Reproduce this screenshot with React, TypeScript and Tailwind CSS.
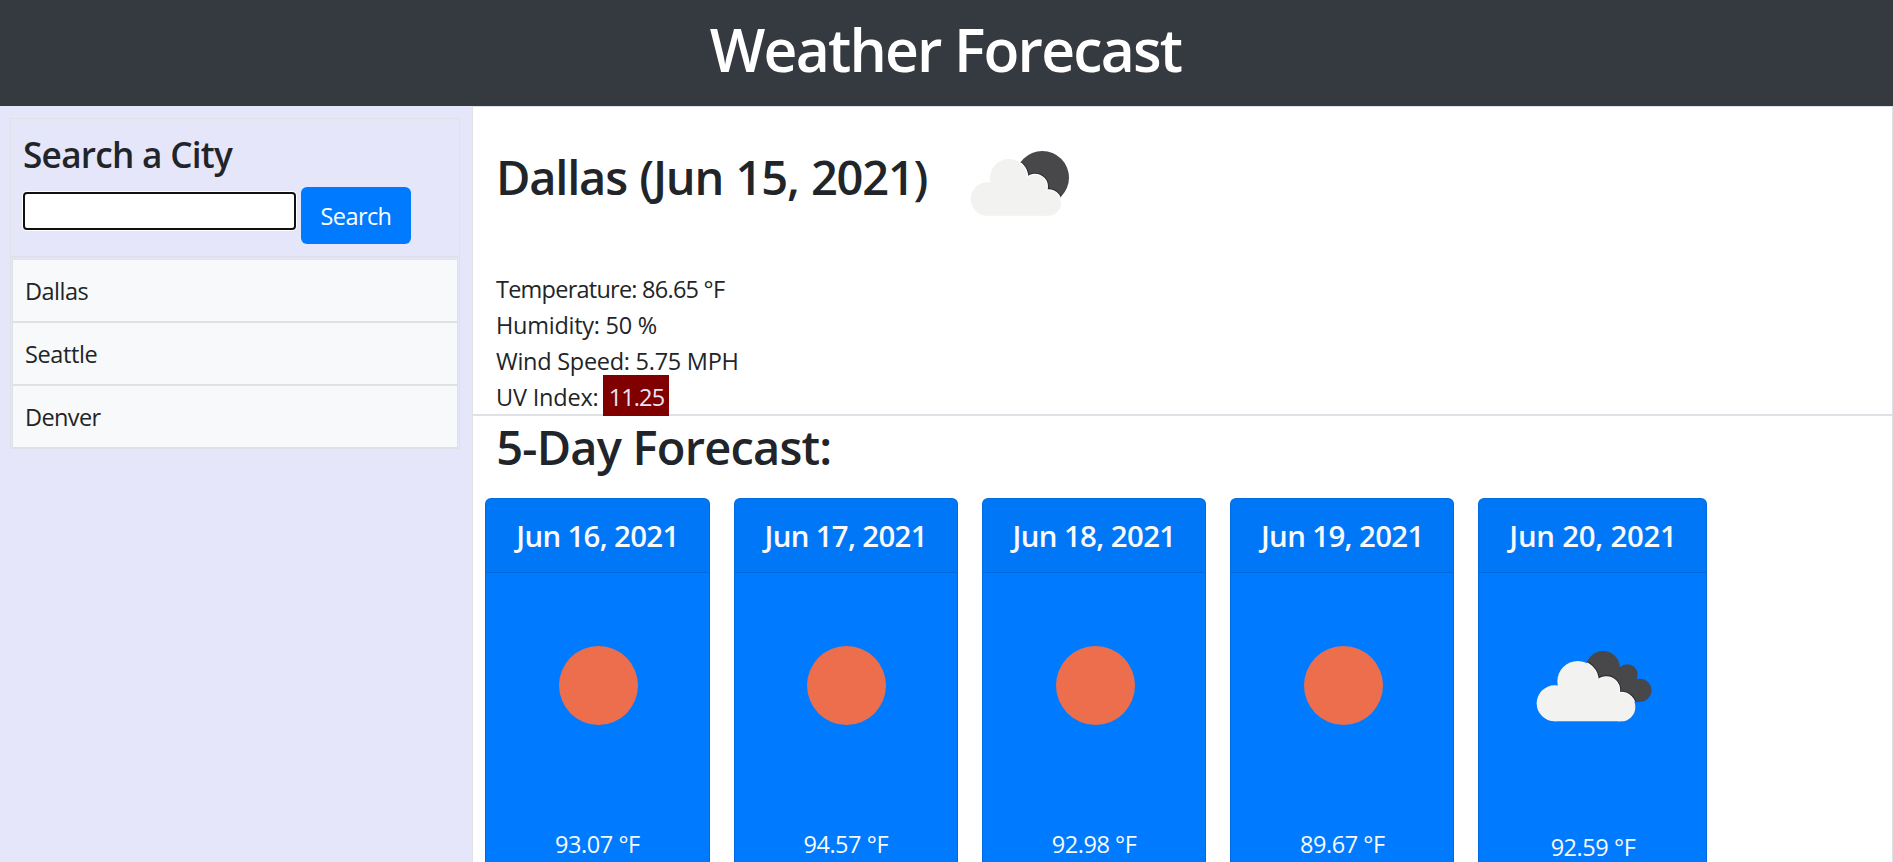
type Day = { date: string; temp: string; sky: "sun" | "clouds"; tracking: string };

const cities = [
  { name: "Dallas", tracking: "tracking-[-0.51px]" },
  { name: "Seattle", tracking: "tracking-[-0.39px]" },
  { name: "Denver", tracking: "tracking-[-0.62px]" },
];

const days: Day[] = [
  { date: "Jun 16, 2021", temp: "93.07 °F", sky: "sun", tracking: "tracking-[-0.65px]" },
  { date: "Jun 17, 2021", temp: "94.57 °F", sky: "sun", tracking: "tracking-[-0.66px]" },
  { date: "Jun 18, 2021", temp: "92.98 °F", sky: "sun", tracking: "tracking-[-0.6px]" },
  { date: "Jun 19, 2021", temp: "89.67 °F", sky: "sun", tracking: "tracking-[-0.62px]" },
  { date: "Jun 20, 2021", temp: "92.59 °F", sky: "clouds", tracking: "tracking-[-0.25px]" },
];

function PartlyCloudy({ className }: { className?: string }) {
  const cloud = (
    <>
      <circle cx="109" cy="207" r="50" />
      <circle cx="173" cy="143" r="56" />
      <circle cx="252" cy="170" r="36" />
      <circle cx="292" cy="219" r="38" />
      <path d="M109 257H292V200L240 150H150L109 190Z" />
    </>
  );
  return (
    <svg viewBox="57 60 300 201" className={className} aria-hidden="true">
      <defs>
        <clipPath id="disc">
          <circle cx="274" cy="143" r="80" />
        </clipPath>
      </defs>
      <circle cx="274" cy="143" r="80" fill="#48484a" />
      <g clipPath="url(#disc)">
        <g fill="#2f2f31" stroke="#2f2f31" strokeWidth="12">{cloud}</g>
        <g fill="#fff" stroke="#fff" strokeWidth="6">{cloud}</g>
      </g>
      <g fill="#f2f2f0">{cloud}</g>
    </svg>
  );
}

function BrokenClouds({ className }: { className?: string }) {
  const back = (
    <>
      <circle cx="309" cy="144" r="51" />
      <circle cx="382" cy="164" r="31" />
      <circle cx="420" cy="211" r="34.5" />
      <path d="M309 144L360 155L382 164L412 190L420 245H350L300 190Z" />
    </>
  );
  const front = (
    <>
      <circle cx="164" cy="250" r="54" />
      <circle cx="233" cy="184" r="61" />
      <circle cx="319" cy="210" r="39" />
      <circle cx="363" cy="261" r="43" />
      <path d="M164 304H363V240L310 190H200L164 230Z" />
    </>
  );
  return (
    <svg viewBox="108 90 348 216" className={className} aria-hidden="true">
      <defs>
        <clipPath id="back-cloud">{back}</clipPath>
      </defs>
      <g fill="#48484a">{back}</g>
      <g clipPath="url(#back-cloud)">
        <g fill="#2f2f31" stroke="#2f2f31" strokeWidth="12">{front}</g>
        <g fill="#fff" stroke="#fff" strokeWidth="5">{front}</g>
      </g>
      <g fill="#f2f2f0">{front}</g>
    </svg>
  );
}

function Sidebar() {
  return (
    <aside className="w-[472px] shrink-0 bg-[#e6e6fa] pt-3 pl-[10px]">
      <form className="h-[139px] w-[450px] border border-[#dee2e6] pt-[14px] pl-[12px]">
        <h3 className="text-[35.2px] leading-[43px] font-semibold tracking-[-0.73px]">Search a City</h3>
        <div className="mt-[11px] flex items-start">
          <input
            aria-label="City"
            className="mt-[5px] h-[38px] w-[273px] rounded-[4px] border-2 border-[#101010] bg-white ring-1 ring-white outline-none"
          />
          <button
            type="button"
            className="ml-[5px] h-[57px] w-[110px] rounded-[6px] bg-[#007bff] text-[23.5px] leading-9 tracking-[-0.6px] text-white"
          >
            Search
          </button>
        </div>
      </form>
      <ul className="w-[450px] border border-[#dee2e6] px-px pt-px">
        {cities.map((c) => (
          <li
            key={c.name}
            className={`flex h-[63px] items-center border border-[#dee2e6] bg-[#f8f9fa] pl-[12px] text-[23.5px] leading-9 ${c.tracking}`}
          >
            {c.name}
          </li>
        ))}
      </ul>
    </aside>
  );
}

function Current() {
  return (
    <section className="h-[309px] border border-[#dee2e6] pl-[23px]">
      <div className="flex h-[164px] items-start">
        <h2 className="mt-[41px] w-[474px] text-[47px] leading-[58px] font-semibold tracking-[-1.2px] whitespace-nowrap [word-spacing:1.4px]">
          Dallas (Jun 15, 2021)
        </h2>
        <PartlyCloudy className="mt-[43px] h-[67px] w-[100px]" />
      </div>
      <div className="text-[23.5px] leading-9">
        <p className="tracking-[-0.76px]">Temperature: 86.65 °F</p>
        <p className="tracking-[-0.26px]">Humidity: 50 %</p>
        <p className="tracking-[-0.27px]">Wind Speed: 5.75 MPH</p>
        <p className="tracking-[-0.2px]">
          UV Index:
          <span className="relative -mt-1 ml-[5px] inline-block h-[41px] w-[66px] bg-[#800000] pt-[5px] text-center align-top leading-[34px] tracking-[-0.87px] text-[#e6e6fa]">
            11.25
          </span>
        </p>
      </div>
    </section>
  );
}

function DayCard({ day }: { day: Day }) {
  const clouds = day.sky === "clouds";
  return (
    <article
      className={`h-[480px] shrink-0 overflow-hidden rounded-[6px] border border-black/[.125] bg-[#007bff] text-[#f8f9fa] ${clouds ? "w-[229px]" : "w-[224.3px]"}`}
    >
      <h5
        className={`flex h-[74px] items-center justify-center border-b border-black/[.125] bg-black/[.03] text-[29.4px] leading-9 font-semibold ${day.tracking}`}
      >
        {day.date}
      </h5>
      <div className={`flex justify-center pl-[2px] ${clouds ? "h-[256px] pt-[77px]" : "h-[253px] pt-[72.5px]"}`}>
        {clouds ? (
          <BrokenClouds className="h-[72px] w-[116px]" />
        ) : (
          <div className="size-[79px] rounded-full bg-[#ec6e4c]" />
        )}
      </div>
      <p className="text-center text-[23.5px] leading-9 tracking-[-0.44px]">{day.temp}</p>
    </article>
  );
}

export default function App() {
  return (
    <div className="flex h-[862px] flex-col overflow-hidden bg-white font-['Open_Sans',sans-serif] text-[#212529]">
      <header className="h-[106px] shrink-0 bg-[#343a40] pt-[13px] pr-[2px]">
        <h1 className="text-center text-[58.8px] leading-[72px] font-semibold tracking-[-1.81px] text-white">
          Weather Forecast
        </h1>
      </header>
      <div className="flex min-h-0 flex-1">
        <Sidebar />
        <main className="min-w-0 flex-1">
          <Current />
          <section className="h-[600px] border border-[#dee2e6] pl-[12.3px]">
            <h2 className="mt-[1.5px] pl-[11px] text-[47px] leading-[58px] font-semibold tracking-[-0.8px]">
              5-Day Forecast:
            </h2>
            <div className="mt-[22.5px] flex gap-6">
              {days.map((d) => (
                <DayCard key={d.date} day={d} />
              ))}
            </div>
          </section>
        </main>
      </div>
    </div>
  );
}
